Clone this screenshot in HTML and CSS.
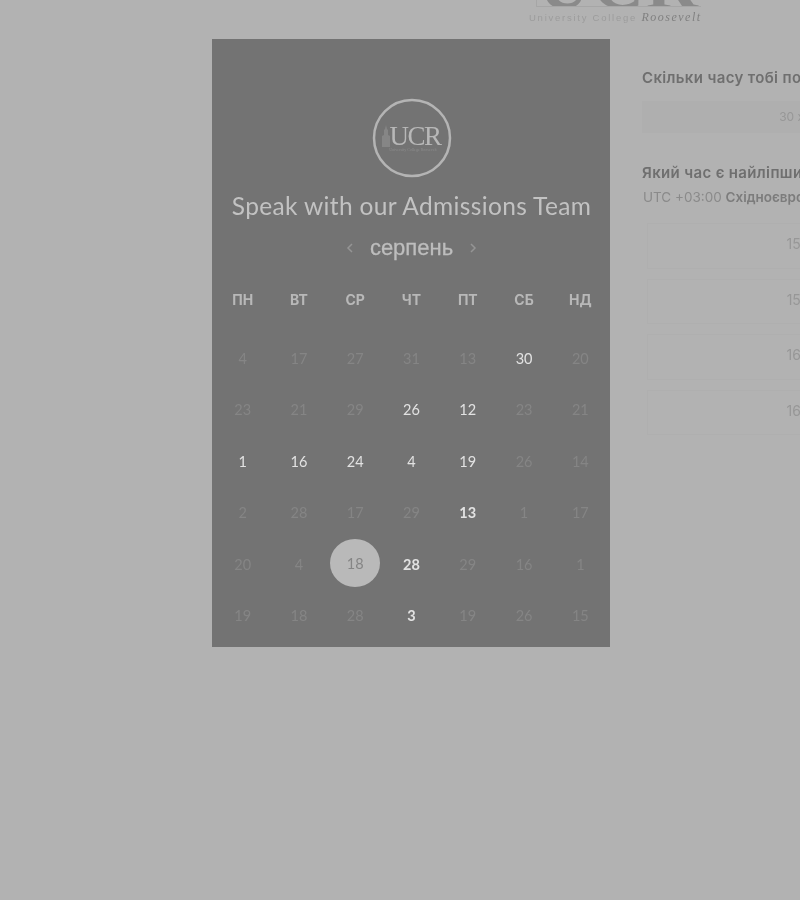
FILE: index.html
```html
<!DOCTYPE html>
<html>
<head>
    <meta charset="utf-8">
    <title>Speak with our Admissions Team</title>
    <link rel="stylesheet" href="styles.css">
</head>
<body>
    <div class="page">
        <header class="top">
            <div class="brand">
                <div class="brand-mark"><span>UCR</span></div>
                <div class="brand-name">University College <em>Roosevelt</em></div>
            </div>
        </header>

        <main class="booking">
            <section class="card">
                <svg class="logo" width="80" height="80" viewBox="0 0 80 80">
                    <circle cx="40" cy="40" r="38" fill="none" stroke="#b4b4b4" stroke-width="2.500"/>
                    <path d="M10 49V38l2-1v-5l1-1 1-4 1 4 1 1v5l2 1v11z" fill="#868686"/>
                    <text x="43" y="47" text-anchor="middle" class="logo-text">UCR</text>
                    <text x="41" y="53" text-anchor="middle" class="logo-small">University College Roosevelt</text>
                </svg>
                <h1 class="title">Speak with our Admissions Team</h1>
                <div class="month">
                    <svg width="8" height="12" viewBox="0 0 8 12"><path d="M6 2 2 6l4 4" fill="none" stroke="#959595" stroke-width="1.500"/></svg>
                    <span class="month-name">серпень</span>
                    <svg width="8" height="12" viewBox="0 0 8 12"><path d="M2 2l4 4-4 4" fill="none" stroke="#959595" stroke-width="1.500"/></svg>
                </div>
                <div class="weekdays">
                    <div>ПН</div><div>ВТ</div><div>СР</div><div>ЧТ</div><div>ПТ</div><div>СБ</div><div>НД</div>
                </div>
                <div class="days">
                    <div>4</div><div>17</div><div>27</div><div>31</div><div>13</div><div class="on">30</div><div>20</div>
                    <div>23</div><div>21</div><div>29</div><div class="on">26</div><div class="on">12</div><div>23</div><div>21</div>
                    <div class="on">1</div><div class="on">16</div><div class="on">24</div><div class="on">4</div><div class="on">19</div><div>26</div><div>14</div>
                    <div>2</div><div>28</div><div>17</div><div>29</div><div class="on strong">13</div><div>1</div><div>17</div>
                    <div>20</div><div>4</div><div class="selected"><span>18</span></div><div class="on strong">28</div><div>29</div><div>16</div><div>1</div>
                    <div>19</div><div>18</div><div>28</div><div class="on strong">3</div><div>19</div><div>26</div><div>15</div>
                </div>
            </section>

            <section class="side">
                <h2 class="side-title">Скільки часу тобі потрібно?</h2>
                <div class="duration">30 хв</div>
                <h2 class="side-title side-title-time">Який час є найліпшим?</h2>
                <p class="zone">UTC +03:00 <b>Східноєвропейський час</b></p>
                <div class="slots">
                    <div class="slot">15:00</div>
                    <div class="slot">15:30</div>
                    <div class="slot">16:00</div>
                    <div class="slot">16:30</div>
                </div>
            </section>
        </main>
    </div>
</body>
</html>
```

FILE: styles.css
```css
html, body {
    margin: 0;
    height: 100%;
    overflow: hidden;
    background-color: #b2b2b2;
}
.page {
    width: 800px;
    height: 900px;
    overflow: hidden;
    font-family: "Inter", "Liberation Sans", sans-serif;
    filter: blur(0.5px);
}
.top {
    height: 39px;
    display: flex;
    padding-left: 529px;
}
.brand {
    width: 180px;
}
.brand-mark {
    height: 7px;
    margin-left: 7px;
    width: 165px;
    box-sizing: border-box;
    border-left: 1px solid #a6a6a6;
    border-bottom: 1px solid #a6a6a6;
    overflow: hidden;
    text-align: center;
}
.brand-mark span {
    display: block;
    margin-top: -52px;
    font-family: "Liberation Serif", serif;
    font-weight: 700;
    font-size: 72px;
    line-height: 72px;
    color: #8a8a8a;
    letter-spacing: 2px;
}
.brand-name {
    margin-top: 3px;
    font-family: "Liberation Sans", sans-serif;
    font-size: 9.500px;
    line-height: 14px;
    letter-spacing: 1.750px;
    color: #9c9c9c;
    white-space: nowrap;
}
.brand-name em {
    font-family: "Liberation Serif", serif;
    color: #808080;
    letter-spacing: 1.500px;
    font-size: 12px;
}
.booking {
    display: flex;
    align-items: flex-start;
    padding-left: 212px;
}
.card {
    flex: none;
    box-sizing: border-box;
    width: 398px;
    height: 608px;
    padding: 59px 1.500px 0 2.500px;
    background-color: #737373;
    text-align: center;
}
.logo {
    display: block;
    margin: 0 auto;
}
.logo-text {
    font-family: "Liberation Serif", serif;
    font-size: 27px;
    letter-spacing: -1.500px;
    fill: #b8b8b8;
}
.logo-small {
    font-family: "Liberation Serif", serif;
    font-size: 4px;
    fill: #8c8c8c;
}
.title {
    margin: 13px 0 0;
    font-family: "Lato", sans-serif;
    font-weight: 400;
    font-size: 24.500px;
    line-height: 30px;
    letter-spacing: 0.350px;
    color: #c2c2c2;
    white-space: nowrap;
}
.month {
    display: flex;
    justify-content: center;
    align-items: center;
    gap: 16px;
    height: 28px;
    margin-top: 13px;
}
.month-name {
    font-family: "Liberation Sans", sans-serif;
    font-size: 22px;
    color: #bdbdbd;
    -webkit-text-stroke: 0.300px #bdbdbd;
}
.weekdays {
    display: grid;
    grid-template-columns: repeat(7, 1fr);
    margin-top: 28px;
    height: 20px;
    line-height: 20px;
    font-size: 14px;
    font-weight: 700;
    color: #b8b8b8;
}
.days {
    display: grid;
    grid-template-columns: repeat(7, 1fr);
    grid-auto-rows: 51.500px;
    margin-top: 22.400px;
    font-family: "Lato", sans-serif;
    font-size: 14.500px;
    color: #858585;
}
.days div {
    display: flex;
    justify-content: center;
    align-items: center;
}
.days .on {
    color: #e2e2e2;
}
.days .strong {
    font-weight: 700;
}
.days .selected span {
    display: flex;
    justify-content: center;
    align-items: center;
    width: 50px;
    height: 48px;
    margin-bottom: 2px;
    border-radius: 50%;
    background-color: #b9b9b9;
    color: #858585;
}
.side {
    flex: none;
    width: 320px;
    margin-left: 32px;
}
.side-title {
    margin: 30px 0 0;
    font-size: 15px;
    line-height: 18px;
    font-weight: 600;
    letter-spacing: 0.350px;
    color: #6f6f6f;
    white-space: nowrap;
}
.duration {
    width: 306px;
    height: 32px;
    margin-top: 14px;
    background-color: #afafaf;
    font-size: 12px;
    line-height: 32px;
    text-align: center;
    color: #979797;
}
.side-title-time {
    margin-top: 31px;
}
.zone {
    margin: 6px 0 0 1px;
    font-size: 13.500px;
    line-height: 18px;
    color: #8a8a8a;
    white-space: nowrap;
}
.zone b {
    font-weight: 600;
    color: #7c7c7c;
}
.slots {
    display: flex;
    flex-direction: column;
    gap: 10px;
    margin: 17px 0 0 5px;
}
.slot {
    box-sizing: border-box;
    height: 45.500px;
    border: 1px solid #afafaf;
    line-height: 40px;
    text-align: center;
    font-size: 14px;
    color: #979797;
}
```
